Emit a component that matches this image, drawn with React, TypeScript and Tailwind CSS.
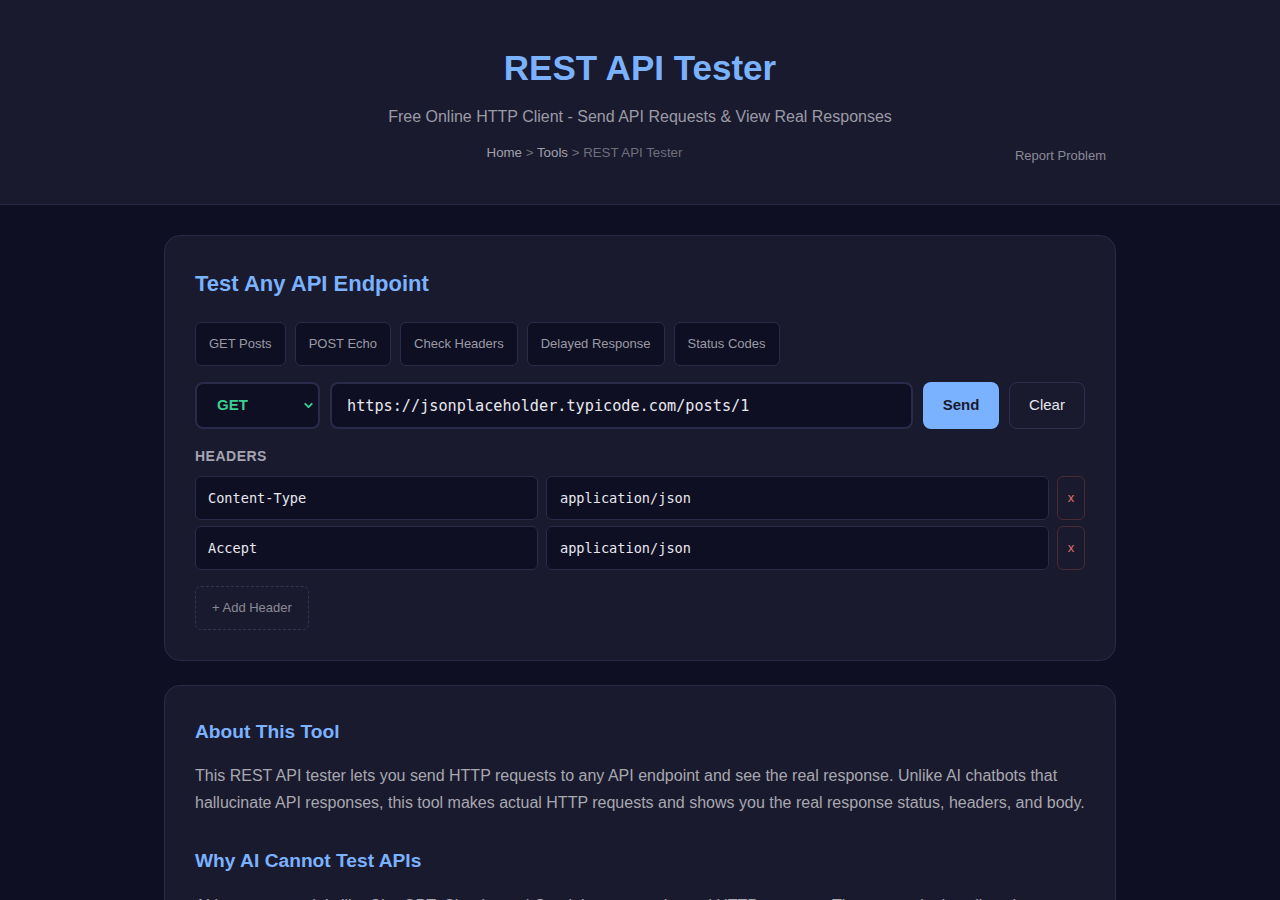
import { ChevronDown } from "lucide-react";

const quickTests = ["GET Posts", "POST Echo", "Check Headers", "Delayed Response", "Status Codes"];

const headers = [
  { key: "Content-Type", value: "application/json" },
  { key: "Accept", value: "application/json" },
];

export default function App() {
  return (
    <div className="min-h-[900px] bg-[#0f0f23] text-[#e0e0e0] font-['Liberation_Sans',Arial,sans-serif]">
      <header className="bg-[#1a1a2e] border-b border-[#2a2a4a] pt-[47px] pb-[38px]">
        <h1 className="text-center text-[35px] leading-[42px] font-bold text-[#7ab2ff]">REST API Tester</h1>
        <p className="mt-[16px] text-center text-[16px] leading-[24px] text-[#9a9aa6]">
          Free Online HTTP Client - Send API Requests &amp; View Real Responses
        </p>
        <div className="mt-[11px] w-[952px] mx-auto flex items-center pr-[10px]">
          <nav className="flex-1 text-center text-[13.3px] leading-[20px] text-[#6f6f7c]">
            <a className="text-[#a0a0ac]">Home</a> &gt; <a className="text-[#a0a0ac]">Tools</a> &gt; REST API Tester
          </nav>
          <a className="ml-[10px] mt-[6px] text-[13px] leading-[20px] text-[#8a8a96]">Report Problem</a>
        </div>
      </header>

      <main className="w-[952px] mx-auto pt-[30px]">
        <section className="bg-[#1a1a2e] border border-[#2a2a4a] rounded-[16px] p-[30px]">
          <h2 className="mt-[5px] mb-[-1px] text-[22px] leading-[26px] font-bold text-[#7ab2ff]">Test Any API Endpoint</h2>

          <div className="mt-[26px] flex gap-[9px]">
            {quickTests.map((t) => (
              <button
                key={t}
                className="h-[44px] px-[13px] rounded-[6px] bg-[#0f0f23] border border-[#2a2a4a] text-[13px] text-[#9a9aa4]"
              >
                {t}
              </button>
            ))}
          </div>

          <div className="mt-[16px] flex gap-[10px] h-[47px]">
            <div className="relative w-[125px]">
              <select
                defaultValue="GET"
                className="appearance-none w-full h-full pl-[20px] rounded-[8px] bg-[#0f0f23] border-2 border-[#2a2a4a] text-[15px] font-bold text-[#3ccf91] outline-none"
              >
                <option>GET</option>
                <option>POST</option>
                <option>PUT</option>
                <option>DELETE</option>
              </select>
              <ChevronDown
                className="absolute right-[5px] top-[17px] w-[13px] h-[13px] text-[#3ccf91] pointer-events-none"
                strokeWidth={3.5}
              />
            </div>
            <input
              defaultValue="https://jsonplaceholder.typicode.com/posts/1"
              className="flex-1 min-w-0 h-full pl-[15px] rounded-[8px] bg-[#0f0f23] border-2 border-[#2a2a4a] font-['DejaVu_Sans_Mono',monospace] text-[15.2px] text-[#e8e8ee] outline-none"
            />
            <button className="w-[76px] rounded-[8px] bg-[#7ab2ff] text-[15px] font-bold text-[#1a1a2e]">Send</button>
            <button className="w-[76px] rounded-[8px] border border-[#2e2e4e] text-[15px] text-[#e6e6ec]">Clear</button>
          </div>

          <div className="mt-[17px] text-[14px] leading-[20px] font-bold tracking-[0.5px] text-[#a4a4b2]">HEADERS</div>

          <div className="mt-[10px] flex flex-col gap-[6px]">
            {headers.map((h) => (
              <div key={h.key} className="flex gap-[8px] h-[44px]">
                <input
                  defaultValue={h.key}
                  className="w-[343px] h-full pl-[12px] rounded-[6px] bg-[#0f0f23] border border-[#2a2a4a] font-['DejaVu_Sans_Mono',monospace] text-[13.6px] text-[#e8e8ee] outline-none"
                />
                <input
                  defaultValue={h.value}
                  className="flex-1 min-w-0 h-full pl-[13px] rounded-[6px] bg-[#0f0f23] border border-[#2a2a4a] font-['DejaVu_Sans_Mono',monospace] text-[13.6px] text-[#e8e8ee] outline-none"
                />
                <button className="w-[28px] rounded-[6px] border border-[#4a2a33] text-[13px] text-[#e06a6a]">x</button>
              </div>
            ))}
          </div>

          <button className="mt-[16px] h-[44px] px-[16px] rounded-[6px] border border-dashed border-[#34344f] text-[13px] text-[#8a8a96]">
            + Add Header
          </button>
        </section>

        <section className="mt-[24px] bg-[#1a1a2e] border border-[#2a2a4a] rounded-[16px] p-[30px]">
          <h3 className="mt-[4px] text-[19.2px] leading-[24px] font-bold text-[#7ab2ff]">About This Tool</h3>
          <p className="mt-[18px] text-[16px] leading-[27.2px] text-[#a8a8b0]">
            This REST API tester lets you send HTTP requests to any API endpoint and see the real response. Unlike AI
            chatbots that hallucinate API responses, this tool makes actual HTTP requests and shows you the real response
            status, headers, and body.
          </p>
          <h3 className="mt-[33px] text-[19.2px] leading-[24px] font-bold text-[#7ab2ff]">Why AI Cannot Test APIs</h3>
          <p className="mt-[19px] text-[16px] leading-[27.2px] text-[#a8a8b0]">
            AI language models like ChatGPT, Claude, and Gemini cannot make real HTTP requests. They can only describe what
            an API might return, often inventing plausible-looking data that does not match the real service.
          </p>
        </section>
      </main>
    </div>
  );
}
